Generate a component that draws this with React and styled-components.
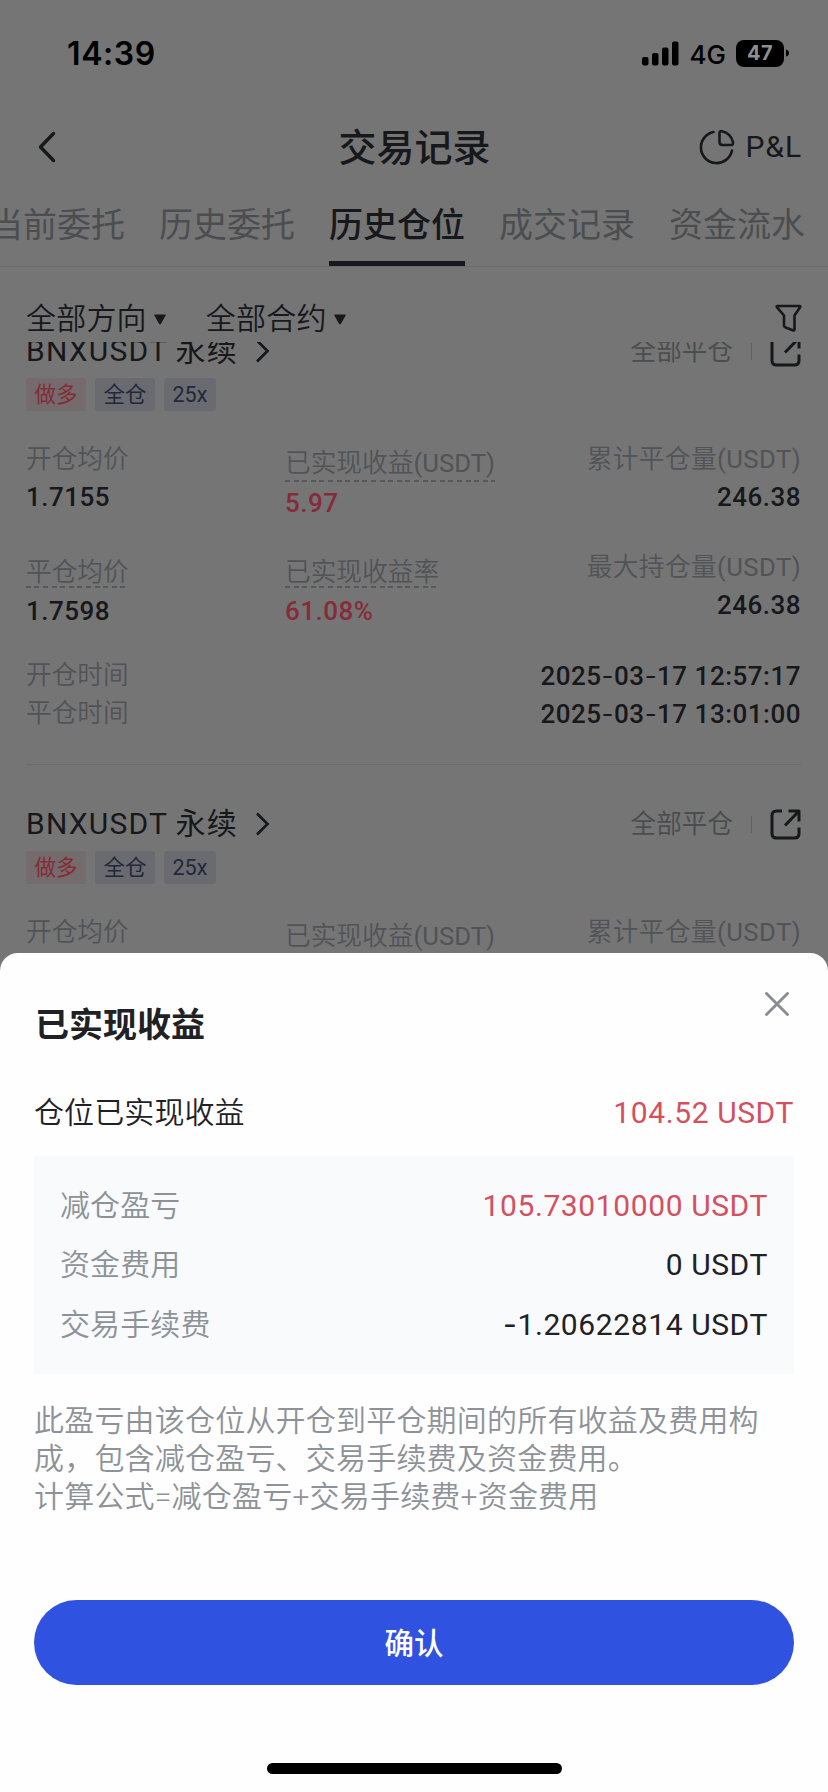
import React from "react";
import styled, { createGlobalStyle } from "styled-components";

const ink = "#17181b";
const muted = "#515357";
const faint = "#4b4d50";
const red = "#852b39";

const GlobalStyle = createGlobalStyle`
  * { box-sizing: border-box; }
  body {
    margin: 0;
    background: #757575;
    font-family: Roboto, "Noto Sans CJK SC", sans-serif;
    color: ${ink};
  }
`;

const Screen = styled.div`
  position: relative;
  display: flex;
  flex-direction: column;
  width: 828px;
  height: 1792px;
  overflow: hidden;
  background: #757575;
`;

const StatusBar = styled.header`
  display: flex;
  align-items: center;
  justify-content: space-between;
  height: 106px;
  padding: 0 39px 0 67px;
  color: #000;
  font-family: Inter, sans-serif;
`;

const Clock = styled.span`
  font-size: 32px;
  font-weight: 600;
  letter-spacing: 0.6px;
`;

const StatusIcons = styled.div`
  display: flex;
  align-items: center;
`;

const Network = styled.span`
  margin: 2px 10px 0 11px;
  font-size: 26px;
  font-weight: 500;
`;

const Battery = styled.span`
  display: flex;
  align-items: center;
  justify-content: center;
  width: 48px;
  height: 27px;
  border-radius: 8px;
  background: #000;
  color: #8f8f8f;
  font-size: 20px;
  font-weight: 700;
  letter-spacing: 0.5px;
`;

const NavBar = styled.div`
  display: grid;
  grid-template-columns: 1fr auto 1fr;
  align-items: center;
  height: 82px;
  padding: 0 26px 0 27px;
`;

const BackIcon = styled.svg`
  margin-left: 9px;
`;

const NavTitle = styled.h1`
  margin: 2px 0 0;
  font-size: 38px;
  line-height: 50px;
  font-weight: 500;
`;

const PnlLink = styled.div`
  display: flex;
  align-items: center;
  justify-content: flex-end;
  gap: 11px;
  font-size: 30px;
  line-height: 40px;
  letter-spacing: 0.9px;
`;

const Tabs = styled.nav`
  display: flex;
  gap: 34px;
  height: 79px;
  margin-left: -11px;
  border-bottom: 1px solid #6c6c6c;
`;

const Tab = styled.span`
  flex: none;
  height: 78px;
  padding-top: 12px;
  font-size: 34px;
  line-height: 50px;
  font-weight: ${(p) => (p.$active ? 500 : 400)};
  color: ${(p) => (p.$active ? ink : faint)};
  border-bottom: ${(p) => (p.$active ? `5px solid ${ink}` : "0")};
`;

const FilterBar = styled.div`
  display: flex;
  align-items: center;
  height: 75px;
  padding: 27px 26px 0 26px;
`;

const FilterChoice = styled.span`
  display: flex;
  align-items: center;
  gap: 7px;
  margin-right: 40px;
  padding-top: 2px;
  font-size: 30px;
  line-height: 40px;
  font-weight: 350;
  letter-spacing: 0.2px;
`;

const FilterIcon = styled.svg`
  margin-left: auto;
`;

const List = styled.main`
  height: 629px;
  overflow: hidden;
`;

const Card = styled.article`
  height: 473px;
  margin: 0 27px 0 26px;
  padding-top: 38px;
  border-bottom: 1px solid #6b6b6b;
  &:first-child { margin-top: -50px; }
`;

const CardHead = styled.div`
  display: flex;
  align-items: center;
  height: 40px;
  padding-top: 2px;
`;

const Pair = styled.h2`
  margin: 0 17px 0 0;
  font-size: 30px;
  line-height: 40px;
  font-weight: 400;
  letter-spacing: 1.2px;
  word-spacing: -0.5px;
`;

const CloseState = styled.span`
  margin-left: auto;
  padding-right: 17.5px;
  font-size: 25.6px;
  line-height: 38px;
  color: ${faint};
`;

const Bar = styled.span`
  width: 1px;
  height: 17px;
  margin-right: 18.5px;
  background: #606164;
`;

const Tags = styled.div`
  display: flex;
  gap: 9px;
  height: 33px;
  margin: 8px 0 29px;
`;

const Tag = styled.span`
  padding: 0 8.5px;
  border-radius: 3px;
  font-size: 21.5px;
  line-height: 33px;
  color: ${(p) => (p.$long ? red : "#22273a")};
  background: ${(p) => (p.$long ? "#736b6c" : "#6a6b70")};
`;

const Metrics = styled.div`
  display: grid;
  grid-template-columns: 259px 1fr auto;
  height: 108px;
`;

const Label = styled.span`
  font-size: 25.7px;
  line-height: 39px;
  height: 38px;
  font-weight: 350;
  color: ${muted};
`;

const Metric = styled.div`
  display: flex;
  flex-direction: column;
  align-items: ${(p) => (p.$end ? "flex-end" : "flex-start")};
  padding-top: ${(p) => p.$drop || 0}px;
  ${Label} { letter-spacing: ${(p) => (p.$end ? 0.4 : 0)}px; }
`;

const DottedLabel = styled(Label)`
  height: ${(p) => (p.$tight ? 35 : 38)}px;
  margin-bottom: ${(p) => (p.$tight ? 4 : 2)}px;
  background: repeating-linear-gradient(90deg, #56585c 0 5px, transparent 5px 8.6px) bottom / 100% 2px no-repeat;
`;

const Latin = styled.span`
  font-weight: 400;
`;

const Value = styled.span`
  font-size: 26px;
  line-height: 39px;
  height: 38px;
  font-weight: 500;
  letter-spacing: 0.5px;
  color: ${(p) => (p.$gain ? red : ink)};
`;

const TimeRow = styled.div`
  display: flex;
  justify-content: space-between;
  height: 38px;
`;

const Dash = styled.span`
  font-family: Inter, sans-serif;
  font-weight: 400;
`;

const Sheet = styled.section`
  position: absolute;
  left: 0;
  right: 0;
  bottom: 0;
  display: flex;
  flex-direction: column;
  height: 839px;
  padding: 0 34px;
  border-radius: 18px 18px 0 0;
  background: #fefefe;
  color: #1f2125;
`;

const SheetHead = styled.div`
  display: flex;
  justify-content: space-between;
  height: 130px;
  padding-top: 39px;
`;

const SheetTitle = styled.h2`
  margin: 8px 0 0 1px;
  font-size: 34px;
  line-height: 50px;
  font-weight: 700;
`;

const CloseIcon = styled.svg`
  margin-right: 5px;
`;

const Line = styled.div`
  display: flex;
  justify-content: space-between;
  align-items: center;
  height: 59.5px;
  font-size: 30px;
  line-height: 40px;
`;

const LineLabel = styled.span`
  font-weight: 350;
  letter-spacing: 0.1px;
  color: ${(p) => (p.$soft ? "#8d9298" : "#1f2125")};
`;

const Amount = styled.span`
  letter-spacing: 0.6px;
  color: ${(p) => (p.$gain ? "#d4505f" : "#1f2125")};
`;

const Breakdown = styled.div`
  height: 218px;
  margin-top: 13.5px;
  padding: 20px 26px 0;
  background: #f8fafc;
`;

const Note = styled.p`
  margin: 28px -10px 0 0;
  font-size: 30px;
  line-height: 38px;
  font-weight: 350;
  letter-spacing: 0.2px;
  color: #8d9298;
`;

const Confirm = styled.button`
  height: 85px;
  margin-top: 84px;
  padding: 2px 0 0;
  border: 0;
  border-radius: 43px;
  background: #3052e0;
  color: #fff;
  font: 500 29.5px/40px Roboto, "Noto Sans CJK SC", sans-serif;
`;

const HomeIndicator = styled.div`
  align-self: center;
  width: 295px;
  height: 11px;
  margin-top: 78px;
  border-radius: 6px;
  background: #000;
`;

const withDashes = (text) =>
  text.split("-").map((part, i) => (
    <React.Fragment key={i}>
      {i > 0 && <Dash>-</Dash>}
      {part}
    </React.Fragment>
  ));

const Caret = () => (
  <svg width="12" height="11" viewBox="0 0 12 11">
    <path d="M1 .5h10q1 0 .6 1L7 9.700q-1 1.300-2 0L.4 1.500Q0 .5 1 .5z" fill={ink} />
  </svg>
);

const Usdt = () => <Latin>(USDT)</Latin>;

function PositionHead() {
  return (
    <>
      <CardHead>
        <Pair>BNXUSDT 永续</Pair>
        <svg width="15" height="24" viewBox="0 0 15 24" fill="none" stroke={ink} strokeWidth="2.700">
          <path d="M2 1.500 12.500 12 2 22.500" />
        </svg>
        <CloseState>全部平仓</CloseState>
        <Bar />
        <svg width="31" height="31" viewBox="0 0 31 31" fill="none" stroke={ink} strokeWidth="3" strokeLinejoin="round">
          <path d="M12 2H6.500Q2 2 2 6.500v18Q2 29 6.500 29h18Q29 29 29 24.500V18.500M18.500 2H29v10.500M29 2 15 16.500" />
        </svg>
      </CardHead>
      <Tags>
        <Tag $long>做多</Tag>
        <Tag>全仓</Tag>
        <Tag>25x</Tag>
      </Tags>
    </>
  );
}

function Position() {
  return (
    <Card>
      <PositionHead />
      <Metrics>
        <Metric>
          <Label>开仓均价</Label>
          <Value>1.7155</Value>
        </Metric>
        <Metric $drop={4}>
          <DottedLabel>已实现收益<Usdt /></DottedLabel>
          <Value $gain>5.97</Value>
        </Metric>
        <Metric $end>
          <Label>累计平仓量<Usdt /></Label>
          <Value>246.38</Value>
        </Metric>
      </Metrics>
      <Metrics>
        <Metric $drop={5}>
          <DottedLabel $tight>平仓均价</DottedLabel>
          <Value>1.7598</Value>
        </Metric>
        <Metric $drop={5}>
          <DottedLabel $tight>已实现收益率</DottedLabel>
          <Value $gain>61.08%</Value>
        </Metric>
        <Metric $end>
          <Label>最大持仓量<Usdt /></Label>
          <Value>246.38</Value>
        </Metric>
      </Metrics>
      <TimeRow>
        <Label>开仓时间</Label>
        <Value>{withDashes("2025-03-17 12:57:17")}</Value>
      </TimeRow>
      <TimeRow>
        <Label>平仓时间</Label>
        <Value>{withDashes("2025-03-17 13:01:00")}</Value>
      </TimeRow>
    </Card>
  );
}

function NextPosition() {
  return (
    <Card>
      <PositionHead />
      <Metrics>
        <Metric><Label>开仓均价</Label></Metric>
        <Metric $drop={4}><Label>已实现收益<Usdt /></Label></Metric>
        <Metric $end><Label>累计平仓量<Usdt /></Label></Metric>
      </Metrics>
    </Card>
  );
}

export default function App() {
  return (
    <Screen>
      <GlobalStyle />
      <StatusBar>
        <Clock>14:39</Clock>
        <StatusIcons>
          <svg width="37" height="25" viewBox="0 0 37 25">
            <rect x="0" y="16" width="6.500" height="8.500" rx="2" />
            <rect x="10" y="12" width="6.500" height="12.500" rx="2" />
            <rect x="20" y="6.500" width="6.500" height="18" rx="2" />
            <rect x="30" y="0.500" width="6.500" height="24" rx="2" />
          </svg>
          <Network>4G</Network>
          <Battery>47</Battery>
          <svg width="5" height="8" viewBox="0 0 5 8">
            <path d="M2 .5Q5 1.500 5 4T2 7.500z" />
          </svg>
        </StatusIcons>
      </StatusBar>
      <NavBar>
        <BackIcon width="22" height="32" viewBox="0 0 22 32" fill="none" stroke={ink} strokeWidth="3.400" strokeLinecap="round" strokeLinejoin="round">
          <path d="M17.500 2.500 4.500 16l13 13.500" />
        </BackIcon>
        <NavTitle>交易记录</NavTitle>
        <PnlLink>
          <svg width="36" height="36" viewBox="0 0 36 36" fill="none" stroke={ink} strokeWidth="2.600" strokeLinecap="round" strokeLinejoin="round">
            <path d="M14.500 3A15.700 15.700 0 1 0 33 21.500" />
            <path d="M20.500 4.200Q20.500 1.800 23 2.200C29 3.500 32.500 7.500 34 13Q34.500 16 31.800 16H23.500Q20.500 16 20.500 13z" />
          </svg>
          P&amp;L
        </PnlLink>
      </NavBar>
      <Tabs>
        <Tab>当前委托</Tab>
        <Tab>历史委托</Tab>
        <Tab $active>历史仓位</Tab>
        <Tab>成交记录</Tab>
        <Tab>资金流水</Tab>
      </Tabs>
      <FilterBar>
        <FilterChoice>
          全部方向
          <Caret />
        </FilterChoice>
        <FilterChoice>
          全部合约
          <Caret />
        </FilterChoice>
        <FilterIcon width="27" height="28" viewBox="0 0 27 28" fill="none" stroke={ink} strokeWidth="2.600" strokeLinejoin="round">
          <path d="M2.500 2h22q1.300 0 .6 1.200L19.500 11.500V25q0 2-1.800 1.300L10 23.200Q9 22.700 9 21.500v-10L1.900 3.200Q1.200 2 2.500 2z" />
        </FilterIcon>
      </FilterBar>
      <List>
        <Position />
        <NextPosition />
      </List>
      <Sheet>
        <SheetHead>
          <SheetTitle>已实现收益</SheetTitle>
          <CloseIcon width="24" height="24" viewBox="0 0 24 24" fill="none" stroke="#888d93" strokeWidth="2.900" strokeLinecap="round">
            <path d="M1.500 1.500 22.500 22.500M22.500 1.500 1.500 22.500" />
          </CloseIcon>
        </SheetHead>
        <Line>
          <LineLabel>仓位已实现收益</LineLabel>
          <Amount $gain>104.52 USDT</Amount>
        </Line>
        <Breakdown>
          <Line>
            <LineLabel $soft>减仓盈亏</LineLabel>
            <Amount $gain>105.73010000 USDT</Amount>
          </Line>
          <Line>
            <LineLabel $soft>资金费用</LineLabel>
            <Amount>0 USDT</Amount>
          </Line>
          <Line>
            <LineLabel $soft>交易手续费</LineLabel>
            <Amount>{withDashes("-1.20622814 USDT")}</Amount>
          </Line>
        </Breakdown>
        <Note>
          此盈亏由该仓位从开仓到平仓期间的所有收益及费用构成，包含减仓盈亏、交易手续费及资金费用。
          <br />
          计算公式=减仓盈亏+交易手续费+资金费用
        </Note>
        <Confirm>确认</Confirm>
        <HomeIndicator />
      </Sheet>
    </Screen>
  );
}
